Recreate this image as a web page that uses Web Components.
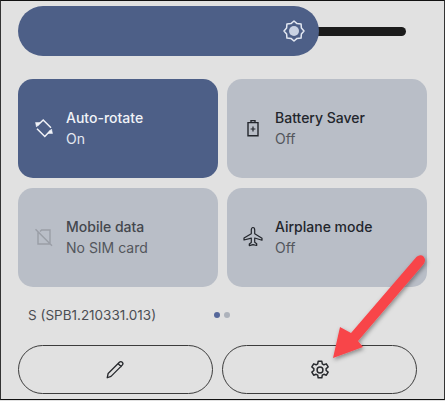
<!DOCTYPE html>
<html>
<head>
<meta charset="utf-8">
<style>
  html, body { margin: 0; padding: 0; background: #e1e1e1; }
  body { width: 445px; height: 401px; overflow: hidden; font-family: Inter, "Noto Sans", sans-serif; }
</style>
</head>
<body>
<qs-panel>
  <qs-slider></qs-slider>
  <qs-grid>
    <qs-tile title="Auto-rotate" state="On" active>
      <svg slot="icon" width="20" height="20" viewBox="0 0 20 20" fill="none" stroke="currentColor" stroke-width="1.500"><path d="M3.500 7.500 9.200 2l7.800 7.800M16.500 12.500 10.800 18.500 3 10.700"/><path d="M1.500 4.500 6.500 4.500 2.500 9zM18.500 15.500 13.500 15.500 17.500 11z" fill="currentColor" stroke-width=".5"/></svg>
    </qs-tile>
    <qs-tile title="Battery Saver" state="Off">
      <svg slot="icon" width="20" height="20" viewBox="0 0 20 20" fill="none" stroke="currentColor" stroke-width="1.400"><path d="M5 4.600h10v13.200H5zM8 4.400V2.600h4v1.800"/><path d="M7.600 11h4.800M10 8.600v4.800" stroke-width="1.200"/></svg>
    </qs-tile>
    <qs-tile title="Mobile data" state="No SIM card" muted>
      <svg slot="icon" width="20" height="20" viewBox="0 0 20 20" fill="none" stroke="currentColor" stroke-width="1.400"><path d="M4 4.500V17h12V3H7.600L6 4.600M1.500 2.200l16.500 16.600"/></svg>
    </qs-tile>
    <qs-tile title="Airplane mode" state="Off">
      <svg slot="icon" width="22" height="22" viewBox="0 0 22 22" fill="none" stroke="currentColor" stroke-width="1.200" stroke-linejoin="round"><path d="M11 1.500c1.100 0 1.700 1.200 1.700 2.600v3.700l7.300 4.400v2l-7.300-2.200v4.300l2 1.500v1.700L11 18.600l-3.700 1v-1.700l2-1.500v-4.300L2 14v-2l7.300-4.200V4.100c0-1.400.6-2.600 1.700-2.600z"/></svg>
    </qs-tile>
  </qs-grid>
  <qs-status build="S (SPB1.210331.013)"></qs-status>
  <qs-actions>
    <qs-button>
      <svg width="25" height="25" viewBox="0 0 20 20" fill="none" stroke="currentColor" stroke-width="1.050" stroke-linejoin="round"><path d="M3.400 16.600l.7-3.400 9-9c.7-.7 1.600-.7 2.300 0 .7.700.7 1.600 0 2.300l-9 9zM12 5.200l2.800 2.800"/></svg>
    </qs-button>
    <qs-button>
      <svg width="22" height="22" viewBox="0 0 24 24" fill="none" stroke="currentColor" stroke-width="1.600" stroke-linejoin="round"><circle cx="12" cy="12" r="3.200"/><path d="M10 2.500h4l.5 2.800 1.700 1 2.700-1 2 3.400-2.200 1.800v2l2.200 1.800-2 3.400-2.700-1-1.700 1-.5 2.800h-4l-.5-2.800-1.700-1-2.700 1-2-3.400 2.200-1.800v-2L3.100 8.700l2-3.400 2.700 1 1.700-1z"/></svg>
    </qs-button>
  </qs-actions>
  <svg class="arrow" width="120" height="125" viewBox="0 0 120 125" style="position:absolute;left:319px;top:249px">
    <defs><filter id="arrow-shadow" x="-20%" y="-20%" width="140%" height="140%"><feDropShadow dx="1" dy="2" stdDeviation="2" flood-color="#000" flood-opacity=".4"/></filter></defs>
    <path filter="url(#arrow-shadow)" fill="#f8444a" d="M95.500 8c2.500-3 6-3.500 8-1.500s2 5 .2 7.500L38 91l5 6-30 11 7-31 11 6z"/>
  </svg>
</qs-panel>

<script>
/**
 * Builds a template from a string of markup.
 *
 * @param {string} html - The markup.
 * @returns {HTMLTemplateElement} - The template.
 */
function makeTemplate (html) {
  const template = document.createElement('template')
  template.innerHTML = html
  return template
}

const panelTemplate = makeTemplate(`
<style>
  :host {
    display: block;
    position: relative;
    box-sizing: border-box;
    width: 445px;
    height: 400px;
    padding: 5px 0 0 17px;
    background: #e1e1e1;
    border-top: 1px solid #111;
    border-left: 1px solid #333;
    border-bottom: 1px solid #111;
    border-right: 1px solid #333;
  }
</style>
<slot></slot>
`)

const sliderTemplate = makeTemplate(`
<style>
  :host {
    display: flex;
    align-items: center;
    width: 388px;
    height: 50px;
    color: #e3e8f2;
  }
  #fill {
    flex: 0 0 301px;
    height: 50px;
    box-sizing: border-box;
    display: flex;
    align-items: center;
    justify-content: flex-end;
    padding-right: 13px;
    background: #4d5f87;
    border-radius: 25px;
    position: relative;
    z-index: 1;
  }
  #track {
    flex: 1;
    height: 9px;
    margin-left: -4px;
    background: #1b1b1b;
    border-radius: 0 5px 5px 0;
  }
</style>
<div id="fill">
  <svg width="24" height="24" viewBox="0 0 24 24">
    <path fill="none" stroke="currentColor" stroke-width="1.500" stroke-linejoin="round" d="M12 2l3.060 2.610 4.010.32.320 4.010L22 12l-2.610 3.060-.320 4.010-4.010.320L12 22l-3.060-2.610-4.010-.320-.320-4.010L2 12l2.610-3.060.320-4.010 4.010-.320z"/>
    <circle cx="12" cy="12" r="5" fill="#c9d2e3"/>
  </svg>
</div>
<div id="track"></div>
`)

const gridTemplate = makeTemplate(`
<style>
  :host {
    display: grid;
    grid-template-columns: 200px 200px;
    grid-auto-rows: 99px;
    column-gap: 9px;
    row-gap: 10px;
    margin-top: 23px;
  }
</style>
<slot></slot>
`)

const tileTemplate = makeTemplate(`
<style>
  :host {
    display: flex;
    align-items: center;
    box-sizing: border-box;
    padding: 0 0 1px 15px;
    border-radius: 15px;
    background: #b9bec7;
    color: #23262c;
    font-size: 14px;
    line-height: 21px;
  }
  :host([active]) { background: #4d5f87; color: #f1f3f8; }
  :host([muted]) { color: #44474d; }
  #icon {
    flex: 0 0 22px;
    display: flex;
    align-items: center;
    justify-content: center;
    margin-right: 11px;
  }
  :host([muted]) #icon { color: #9a9ea6; }
  #title { font-weight: 450; white-space: nowrap; }
  #state { color: #53565c; white-space: nowrap; }
  :host([active]) #state { color: #e4e8f1; }
</style>
<div id="icon"><slot name="icon"></slot></div>
<div>
  <div id="title"></div>
  <div id="state"></div>
</div>
`)

const statusTemplate = makeTemplate(`
<style>
  :host {
    display: flex;
    align-items: center;
    width: 400px;
    height: 20px;
    margin-top: 18px;
    padding-left: 10px;
    box-sizing: border-box;
    font-size: 13.500px;
    color: #4b4e53;
  }
  #build { flex: 0 0 186px; white-space: nowrap; }
  .dot { width: 6px; height: 6px; border-radius: 50%; background: #55679a; margin-right: 4px; }
  .dot + .dot { background: #adb2bb; }
</style>
<span id="build"></span>
<span class="dot"></span><span class="dot"></span>
`)

const actionsTemplate = makeTemplate(`
<style>
  :host {
    display: flex;
    gap: 9px;
    margin-top: 20px;
  }
</style>
<slot></slot>
`)

const buttonTemplate = makeTemplate(`
<style>
  :host {
    display: flex;
    align-items: center;
    justify-content: center;
    box-sizing: border-box;
    width: 195px;
    height: 49px;
    border: 1.500px solid #3c3c3c;
    border-radius: 25px;
    color: #26282c;
  }
</style>
<slot></slot>
`)

/**
 * Defines an element that only clones its template into a shadow root.
 *
 * @param {string} name - The element name.
 * @param {HTMLTemplateElement} template - The template to clone.
 */
function definePlain (name, template) {
  customElements.define(name, class extends HTMLElement {
    /**
     * Makes an instance of this type.
     */
    constructor () {
      super()
      this.attachShadow({ mode: 'open' })
        .appendChild(template.content.cloneNode(true))
    }
  })
}

definePlain('qs-panel', panelTemplate)
definePlain('qs-slider', sliderTemplate)
definePlain('qs-grid', gridTemplate)
definePlain('qs-actions', actionsTemplate)
definePlain('qs-button', buttonTemplate)

customElements.define('qs-tile',
  /**
   * One quick settings tile.
   */
  class extends HTMLElement {
    /**
     * Makes an instance of this type.
     */
    constructor () {
      super()
      this.attachShadow({ mode: 'open' })
        .appendChild(tileTemplate.content.cloneNode(true))
    }

    /**
     * Called when the element has been inserted into the DOM.
     */
    connectedCallback () {
      this.shadowRoot.querySelector('#title').textContent = this.getAttribute('title')
      this.shadowRoot.querySelector('#state').textContent = this.getAttribute('state')
    }
  }
)

customElements.define('qs-status',
  /**
   * The build number row with the page dots.
   */
  class extends HTMLElement {
    /**
     * Makes an instance of this type.
     */
    constructor () {
      super()
      this.attachShadow({ mode: 'open' })
        .appendChild(statusTemplate.content.cloneNode(true))
    }

    /**
     * Called when the element has been inserted into the DOM.
     */
    connectedCallback () {
      this.shadowRoot.querySelector('#build').textContent = this.getAttribute('build')
    }
  }
)
</script>
</body>
</html>
